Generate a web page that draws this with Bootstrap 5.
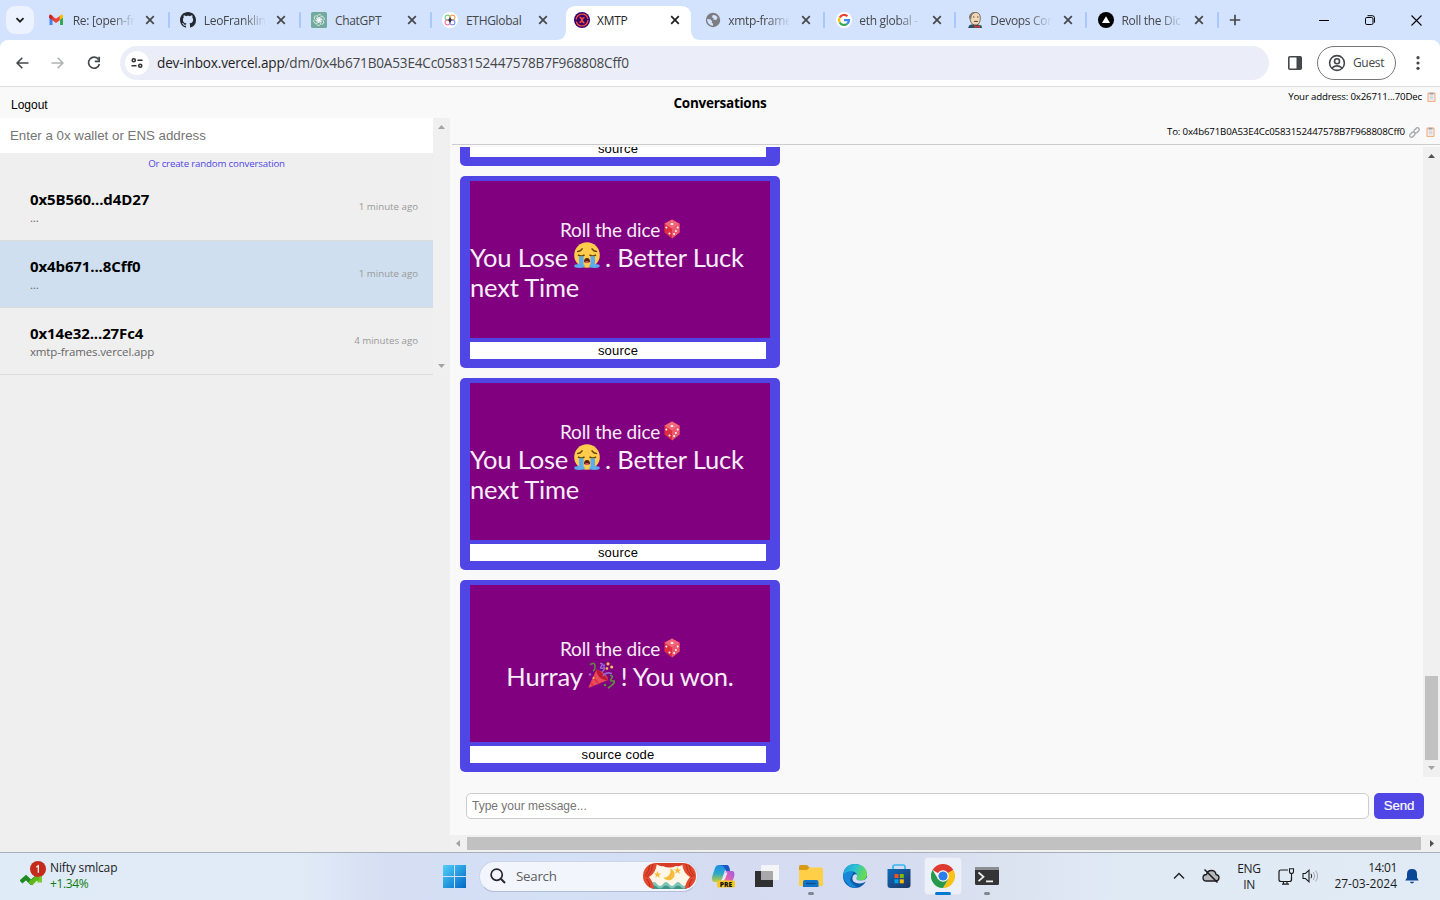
<!DOCTYPE html>
<html lang="en">
<head>
<meta charset="utf-8">
<meta name="viewport" content="width=device-width, initial-scale=1">
<title>XMTP</title>
<link href="https://cdn.jsdelivr.net/npm/bootstrap@5.3.0/dist/css/bootstrap.min.css" rel="stylesheet">
<style>
  body { width: 1440px; height: 900px; overflow: hidden; font-family: "Open Sans", "Noto Sans", sans-serif; font-size: 12px; line-height: 16px; color: #000; background: #f9f9f9; }
  svg { display: block; flex: none; }
  .arial { font-family: "Liberation Sans", Arial, sans-serif; }
  .t { white-space: nowrap; display: inline-block; }
  .ls-1 { letter-spacing: -.15px; }
  .ls-3 { letter-spacing: -.35px; }

  /* browser chrome */
  .tabstrip { height: 40px; background: #d3e3fd; color: #45474a; }
  .tab-search { width: 28px; height: 28px; margin: 6px 7.2px 6px 6px; border-radius: 9px; background: #ecf2fe; flex: none; }
  .btab { width: 131.1px; height: 40px; padding-left: 8px; position: relative; flex: none; letter-spacing: -.3px; }
  .btab .ttl { width: 64px; margin-left: 7.5px; padding-top: 1px; white-space: nowrap; flex: none; }
  .btab .fade-out { -webkit-mask-image: linear-gradient(90deg, #000 60%, transparent 97%); mask-image: linear-gradient(90deg, #000 60%, transparent 97%); }
  .btab .cls { margin-left: 8.5px; }
  .btab.sep::after { content: ""; position: absolute; left: 126.6px; top: 12px; width: 2px; height: 16px; background: #a8c7fa; border-radius: 1px; }
  .btab.on { color: #1f1f1f; }
  .btab > * { z-index: 1; position: relative; }
  .btab.on > .tab-bg { position: absolute; left: -10px; top: 6px; z-index: 0; }
  .toolbar { height: 46px; background: #d3e3fd; }
  .toolbar-in { background: #fff; border-radius: 8px 8px 0 0; height: 46px; width: 100%; }
  .omnibox { width: 1149px; height: 34px; border-radius: 17px; background: #ebeef8; font-size: 13.6px; letter-spacing: -.19px; color: #45474a; }
  .site-btn { width: 24px; height: 24px; border-radius: 50%; background: #fff; margin: 0 8px 0 5px; }
  .guest { width: 79px; height: 34px; border: 1px solid #74777a; border-radius: 17px; color: #45474a; }

  /* page */
  .app { height: 766px; border-top: 1px solid #dcdddf; }
  .topbar { height: 31px; }
  .tiny { font-size: 9.7px; letter-spacing: -.17px; }
  .side { width: 450px; height: 734px; background: #efefef; }
  .side-list { height: 257px; }
  .finder { height: 35px; background: #fff; font-size: 13.3px; color: #757575; padding-left: 10px; }
  .random { height: 21px; color: #4f46e5; }
  .conv { height: 67px; padding: 0 15px 0 30px; border-bottom: 1px solid #dcdcdc; }
  .conv.sel { background: #cfdfef; }
  .conv .who { font-size: 15px; font-weight: 700; line-height: 19px; letter-spacing: -.11px; padding-top: 1px; }
  .conv .last { font-size: 11.5px; color: #666; line-height: 17px; letter-spacing: -.15px; }
  .conv .ago { font-size: 9.7px; color: #999; }
  .vbar { width: 17px; background: #f0f0f0; }
  .peer { height: 27px; border-bottom: 1px solid #ccc; margin-left: 2px; padding: 2px 5px 0 0; }
  .log { overflow: hidden; height: 625px; }
  .log-in { margin-left: 10px; gap: 10px; }
  .frame-box { width: 320px; height: 192px; background: #4f46e5; border-radius: 5px; padding: 5px 10px 9px; flex: none; }
  .frame-img { width: 300px; height: 157px; background: #800080; color: #f8eef8; font-family: Lato, sans-serif; letter-spacing: -.17px; font-variant-ligatures: none; }
  .frame-img .l1 { font-size: 19px; line-height: 24px; height: 24px; }
  .frame-img .l1 svg { margin: 1px 0 0 4px; }
  .frame-img .l2 { font-size: 25.5px; line-height: 30px; }
  .src { width: 296px; height: 17px; background: #fff; margin-top: 4px; font-size: 13px; line-height: 18px; letter-spacing: .18px; text-align: center; }
  .composer { height: 58px; padding: 16px 16px 0 16px; }
  .msg { width: 903px; height: 26px; border: 1px solid #ccc; border-radius: 5px; background: #fff; font-size: 12px; color: #757575; padding-left: 5px; }
  .send { width: 50px; height: 26px; border-radius: 5px; background: #4f46e5; color: #fff; font-size: 13.3px; margin-left: 5px; -webkit-text-stroke: .2px #fff; }
  .hbar { height: 17px; background: #f0f0f0; }
  .hthumb { width: 954px; height: 13px; background: #c1c1c1; }
  .vthumb { width: 13px; height: 84px; background: #c1c1c1; margin-top: 518px; }

  /* taskbar */
  .taskbar { height: 48px; border-top: 1px solid #a9b0bc; padding-bottom: 1px; color: #1c1c1c;
    background: linear-gradient(90deg, #dfebf6 0, #e1ebf7 300px, #d6def3 385px, #d3e0f6 570px, #d5dcf2 720px, #d6dcf0 900px, #dbe3f0 1010px, #e0eaf5 1120px, #e0ebf6 1440px); }
  .slot { width: 44px; height: 46px; flex: none; position: relative; }
  .slot .dot { position: absolute; bottom: 4px; left: 19px; width: 6px; height: 3px; border-radius: 2px; background: #7f8696; }
  .slot .dot.wide { left: 14px; width: 16px; background: #0078d4; }
  .slot.act::before { content: ""; position: absolute; left: 3px; top: 4px; width: 38px; height: 38px; border-radius: 4px; background: #ecf0f9; border: 1px solid #e0e4f0; }
  .slot svg { position: relative; }
  .find { width: 219px; height: 31px; border-radius: 16px; background: #f2f5fc; border: 1px solid #cdd5e8; border-bottom-color: #b3bdd6; font-size: 13.300px; letter-spacing: -.25px; color: #5c5e62; }
</style>
</head>
<body>
<svg width="0" height="0" style="position:absolute">
  <defs>
    <symbol id="x" viewBox="0 0 10 10"><path d="M1.200 1.200l7.600 7.600M8.800 1.200L1.200 8.800" stroke="currentColor" stroke-width="1.700" fill="none"/></symbol>
    <symbol id="clip" viewBox="0 0 10 12"><rect x=".5" y="1" width="9" height="10.500" rx="1" fill="#f0b083"/><rect x="1.800" y="2.300" width="6.400" height="8" fill="#f4f2f4"/><path d="M2.800 1.300h4.400v2H2.800z" fill="#9ea2aa"/><path d="M3 5h4M3 6.600h4M3 8.200h4" stroke="#b9bcc8" stroke-width=".7"/></symbol>
    <symbol id="dice" viewBox="0 0 16 20"><path d="M8 .5l7.600 4.200v8.800L8 19.500.4 13.500V4.700z" fill="#dd2e44"/><path d="M8 .5l7.600 4.200L8 9.400.4 4.700z" fill="#f4677a"/><path d="M8 9.400l7.600-4.700v8.800L8 19.500z" fill="#ea596e"/><g fill="#fff"><ellipse cx="8" cy="5" rx="1.500" ry="1"/><circle cx="2.400" cy="8.600" r="1"/><circle cx="5.500" cy="14.400" r="1"/><circle cx="10.200" cy="15" r="1"/><circle cx="11.900" cy="11.900" r="1"/><circle cx="13.700" cy="8.400" r="1"/></g></symbol>
    <symbol id="sob" viewBox="0 0 26 26"><circle cx="13" cy="13" r="12.800" fill="#ffcc4d"/><path d="M3 9.600q3.500.1 5.500-3.200M17.600 6.400q2 3.200 5.500 3.200" stroke="#664500" stroke-width="1.300" fill="none"/><path d="M4 12.800q3.500 2.500 6.500 0M15.500 12.800q3.500 2.500 6.500 0" stroke="#664500" stroke-width="1.500" fill="none"/><path d="M5 14.200h4.500v9.300H5zM16.500 14.200H21v9.300h-4.500z" fill="#5dadec"/><ellipse cx="5.500" cy="24" rx="5.300" ry="1.900" fill="#5dadec"/><ellipse cx="20.500" cy="24" rx="5.300" ry="1.900" fill="#5dadec"/><path d="M10 20q0-4 3-4t3 4q-3 1.600-6 0z" fill="#5b1f0a"/><path d="M10.600 20.200q2.400-2.400 4.800 0-2.400 1-4.800 0z" fill="#e75a70"/></symbol>
    <symbol id="party" viewBox="0 0 27 27"><path d="M8.500 7.500Q20 11.500 20 18L1.500 25.500Q.3 26 .8 24.500z" fill="#ea4a5c"/><path d="M8.500 7.500q7 3 11.500 10.500-5 1-8.600-3T8.500 7.500z" fill="#be1931"/><path d="M5.500 16l5.500 6M3 21l2.500 3" stroke="#dd2e44" stroke-width="1.500"/><path d="M2 2.600q5-3 5 1.500T5 9" stroke="#5c913b" stroke-width="1.500" fill="none"/><path d="M12 1.500q4-.5 1.500 2.500t1.500 2-1 4M15 14q3-4.500 9-2.500" stroke="#9266cc" stroke-width="1.600" fill="none"/><path d="M22 13.500q4 0 1.500 3t1.500 2.500-1 4-3 2" stroke="#5c913b" stroke-width="1.600" fill="none"/><g fill="#ffcc4d"><circle cx="20" cy="1.800" r="1.600"/><circle cx="23.700" cy="5" r="1.500"/><circle cx="19" cy="6.500" r="1.200"/><circle cx="5.500" cy="16" r="1"/></g><g fill="#9266cc"><circle cx="2" cy="12.500" r="1.300"/><circle cx="16" cy="3.500" r="1.200"/></g><circle cx="17" cy="23" r="1.300" fill="#5c913b"/></symbol>
  </defs>
</svg>

<header class="tabstrip d-flex">
  <div class="tab-search d-flex align-items-center justify-content-center"><svg width="12" height="12" viewBox="0 0 12 12"><path d="M2.500 4.200L6 7.700l3.500-3.500" stroke="#1f1f1f" stroke-width="1.800" fill="none"/></svg></div>

  <div class="btab sep d-flex align-items-center">
    <svg width="16" height="16" viewBox="1 0 16 16"><path d="M1.500 4v9h3V6z" fill="#4285f4"/><path d="M12 6v7h3V4z" fill="#34a853"/><path d="M4 3.800l4 3 4-3V8l-4 3-4-3z" fill="#ea4335"/><path d="M1 4.500Q1 2 3 2.700l1.300 1V8L1 5.800z" fill="#c5221f"/><path d="M15 4.500Q15 2 13 2.700l-1.300 1V8L15 5.800z" fill="#fbbc04"/></svg>
    <div class="ttl fade-out"><span class="t">Re: [open-fr</span></div><svg class="cls" width="10" height="10"><use href="#x"/></svg>
  </div>
  <div class="btab sep d-flex align-items-center">
    <svg width="16" height="16" viewBox="0 0 16 16"><path fill="#24292f" d="M8 0C3.580 0 0 3.580 0 8c0 3.540 2.290 6.530 5.470 7.590.4.070.55-.17.55-.38 0-.19-.01-.82-.01-1.490-2.010.37-2.530-.49-2.690-.94-.09-.23-.48-.94-.82-1.130-.28-.15-.68-.52-.01-.53.63-.01 1.080.58 1.230.82.72 1.210 1.870.87 2.330.66.070-.52.28-.87.51-1.070-1.780-.2-3.640-.89-3.640-3.950 0-.87.31-1.590.82-2.150-.08-.2-.36-1.020.08-2.120 0 0 .67-.21 2.200.82.640-.18 1.320-.27 2-.27s1.360.09 2 .27c1.530-1.040 2.200-.82 2.200-.82.44 1.100.16 1.920.08 2.120.51.56.82 1.270.82 2.150 0 3.070-1.870 3.750-3.650 3.950.29.25.54.73.54 1.480 0 1.070-.01 1.930-.01 2.200 0 .21.15.46.55.38A8.010 8.010 0 0 0 16 8c0-4.420-3.580-8-8-8z"/></svg>
    <div class="ttl fade-out"><span class="t">LeoFranklin</span></div><svg class="cls" width="10" height="10"><use href="#x"/></svg>
  </div>
  <div class="btab sep d-flex align-items-center">
    <svg width="16" height="16" viewBox="0 0 16 16"><rect width="16" height="16" rx="1.500" fill="#74aa9c"/><g fill="none" stroke="#fff" stroke-width=".7"><g id="petal"><path d="M6.200 9V5a2.400 2.400 0 0 1 4.300-1.500M7 8.600l3.600-2.100"/></g><use href="#petal" transform="rotate(60 8 8)"/><use href="#petal" transform="rotate(120 8 8)"/><use href="#petal" transform="rotate(180 8 8)"/><use href="#petal" transform="rotate(240 8 8)"/><use href="#petal" transform="rotate(300 8 8)"/></g></svg>
    <div class="ttl"><span class="t">ChatGPT</span></div><svg class="cls" width="10" height="10"><use href="#x"/></svg>
  </div>
  <div class="btab d-flex align-items-center">
    <svg width="16" height="16" viewBox="0 0 16 16"><circle cx="8" cy="8" r="8" fill="#fff"/><g fill="none" stroke-width="1.100"><circle cx="5.500" cy="5.500" r="2.400" stroke="#7fc98b"/><circle cx="10.500" cy="5.500" r="2.400" stroke="#f3a45c"/><circle cx="5.500" cy="10.500" r="2.400" stroke="#ef7a9c"/><circle cx="10.500" cy="10.500" r="2.400" stroke="#7b8cf0"/></g><path d="M8 5l1.700 3L8 11 6.300 8z" fill="#32333b"/></svg>
    <div class="ttl"><span class="t">ETHGlobal</span></div><svg class="cls" width="10" height="10"><use href="#x"/></svg>
  </div>
  <div class="btab on d-flex align-items-center">
    <svg class="tab-bg" width="145" height="34" viewBox="0 0 145 34"><path d="M0 34q10 0 10-10V10Q10 0 20 0h105q10 0 10 10v14q0 10 10 10z" fill="#fff"/></svg>
    <svg width="16" height="16" viewBox="0 0 16 16"><circle cx="8" cy="8" r="8" fill="#31006e"/><circle cx="8" cy="8" r="5.900" fill="none" stroke="#fc4f37" stroke-width="1.300" stroke-dasharray="16.500 2"/><path d="M5.500 5.500q1.500-.5 2.500 2.500t2.500 2.500M10.500 5.500q-1.500 0-2.500 2.500t-2.500 2.500" stroke="#fc4f37" stroke-width="1.600" fill="none"/></svg>
    <div class="ttl"><span class="t">XMTP</span></div><svg class="cls" width="10" height="10"><use href="#x"/></svg>
  </div>
  <div class="btab sep d-flex align-items-center">
    <svg width="16" height="16" viewBox="0 0 16 16"><circle cx="8" cy="8" r="7.200" fill="#7b7d80"/><path d="M2.200 7l3 .3 2 2-.5 1.500 1.500 1-.3 2Q3 13 2.200 8.500zM8 2.700q3 0 4.600 2.500l-1.300 2.700-3-.3.3-1.600-1.800-.7z" fill="#d3e3fd"/></svg>
    <div class="ttl fade-out"><span class="t">xmtp-frame</span></div><svg class="cls" width="10" height="10"><use href="#x"/></svg>
  </div>
  <div class="btab sep d-flex align-items-center">
    <svg width="16" height="16" viewBox="0 0 16 16"><circle cx="8" cy="8" r="8" fill="#fff"/><g fill="none" stroke-width="2.200"><path d="M11.500 4.300A5 5 0 0 0 3.700 5.600" stroke="#ea4335"/><path d="M3.700 5.600a5 5 0 0 0 0 4.900" stroke="#fbbc05"/><path d="M3.700 10.500a5 5 0 0 0 7.500 1.300" stroke="#34a853"/><path d="M8 8.200h5a5 5 0 0 1-1.800 3.600" stroke="#4285f4"/></g></svg>
    <div class="ttl fade-out"><span class="t">eth global -</span></div><svg class="cls" width="10" height="10"><use href="#x"/></svg>
  </div>
  <div class="btab sep d-flex align-items-center">
    <svg width="16" height="16" viewBox="0 0 16 16"><path d="M1 16l1.500-3L7 12l4 .5 3.500 1 .5 2.500z" fill="#335061"/><path d="M2.500 5Q3 .5 8 .4t5.300 4.800Q13.500 12 9.500 13 5 13.500 3.500 9z" fill="#f0d6b7" stroke="#4d4033" stroke-width=".7"/><path d="M2.600 5Q4 .2 8.500.8 5 2 4.600 4.500L4 8z" fill="#7d7366"/><path d="M6 5h1.500M10 5h1.500M7 9.700q2-1 4 0" stroke="#4d4033" stroke-width=".9"/><path d="M7 13l3 1.300L13 13v3l-3-1-2 1z" fill="#d33833"/></svg>
    <div class="ttl fade-out"><span class="t">Devops Con</span></div><svg class="cls" width="10" height="10"><use href="#x"/></svg>
  </div>
  <div class="btab sep d-flex align-items-center">
    <svg width="16" height="16" viewBox="0 0 16 16"><circle cx="8" cy="8" r="8" fill="#000"/><path d="M8 4.300l4 6.700H4z" fill="#fff"/></svg>
    <div class="ttl fade-out"><span class="t">Roll the Dic</span></div><svg class="cls" width="10" height="10"><use href="#x"/></svg>
  </div>
  <div class="d-flex align-items-center ms-2"><svg width="12" height="12" viewBox="0 0 12 12"><path d="M6 .8v10.400M.8 6h10.400" stroke="#45474a" stroke-width="1.700"/></svg></div>
  <div class="d-flex align-items-center ms-auto" style="gap:36px;padding-right:18px">
    <svg width="10" height="10" viewBox="0 0 10 10"><path d="M0 5.500h10" stroke="#000"/></svg>
    <svg width="10" height="10" viewBox="0 0 10 10"><rect x=".5" y="2.500" width="7.500" height="7" rx="1.300" fill="none" stroke="#000"/><path d="M2.500.7h4.800q2.200 0 2.200 2.200v4.800" fill="none" stroke="#000"/></svg>
    <svg width="11" height="11" viewBox="0 0 11 11"><path d="M.5.5l10 10M10.500.5l-10 10" stroke="#000" stroke-width="1.100"/></svg>
  </div>
</header>

<div class="toolbar"><div class="toolbar-in d-flex align-items-center">
  <svg style="margin-left:16px" width="13" height="12" viewBox="0 0 13 12"><path d="M12.500 6H1.200M6.300.8L1.100 6l5.200 5.200" stroke="#45474a" stroke-width="1.600" fill="none"/></svg>
  <svg style="margin-left:22px" width="13" height="12" viewBox="0 0 13 12"><path d="M.5 6h11.300M6.700.8L11.900 6l-5.200 5.200" stroke="#b0b2b5" stroke-width="1.600" fill="none"/></svg>
  <svg style="margin-left:23px" width="14" height="14" viewBox="0 0 14 14"><path d="M11.600 3.600A5.500 5.500 0 1 0 12.400 8" stroke="#45474a" stroke-width="1.700" fill="none"/><path d="M12.200.8v4.500H7.800" stroke="#45474a" stroke-width="1.700" fill="none"/></svg>
  <div class="omnibox d-flex align-items-center" style="margin-left:19px">
    <div class="site-btn d-flex align-items-center justify-content-center"><svg width="12" height="12" viewBox="0 0 13 12"><g fill="none" stroke="#303236" stroke-width="1.700"><circle cx="3" cy="3" r="1.700"/><path d="M7 3h5.500M.5 9H6"/><circle cx="10" cy="9" r="1.700"/></g></svg></div>
    <span class="t"><span style="color:#1f1f1f">dev-inbox.vercel.app</span>/dm/0x4b671B0A53E4Cc0583152447578B7F968808Cff0</span>
  </div>
  <svg style="margin-left:19px" width="14" height="14" viewBox="0 0 14 14"><rect x=".8" y=".8" width="12.400" height="12.400" fill="none" stroke="#45474a" stroke-width="1.600" rx="1"/><path d="M8.500 1H13v12H8.500z" fill="#45474a"/></svg>
  <div class="guest d-flex align-items-center" style="margin-left:15px"><svg style="margin-left:10px" width="18" height="18" viewBox="0 0 18 18"><g fill="none" stroke="#45474a" stroke-width="1.600"><circle cx="9" cy="9" r="7.400"/><circle cx="9" cy="7.200" r="2.500"/><path d="M3.800 14q5.200-4.200 10.400 0"/></g></svg><span class="t ls-3" style="margin-left:7px">Guest</span></div>
  <svg style="margin-left:20px" width="4" height="14" viewBox="0 0 4 14" fill="#45474a"><circle cx="2" cy="1.700" r="1.600"/><circle cx="2" cy="7" r="1.600"/><circle cx="2" cy="12.300" r="1.600"/></svg>
</div></div>

<main class="app">
  <div class="topbar d-flex">
    <div class="col d-flex align-items-center" style="padding:4px 0 0 11px"><span class="t arial">Logout</span></div>
    <div class="col-auto d-flex align-items-center fw-bold" style="font-size:13.500px;letter-spacing:-.26px;padding-top:1px"><span class="t">Conversations</span></div>
    <div class="col d-flex justify-content-end tiny" style="padding:2px 4px 0 7px"><span class="t">Your address: 0x26711...70Dec</span><svg style="margin:2px 0 0 5px" width="9" height="12"><use href="#clip"/></svg></div>
  </div>
  <div class="d-flex">
    <aside class="side">
      <div class="side-list d-flex">
        <div class="flex-grow-1">
          <div class="finder arial d-flex align-items-center"><span class="t">Enter a 0x wallet or ENS address</span></div>
          <div class="random tiny d-flex align-items-center justify-content-center"><span class="t">Or create random conversation</span></div>
          <div class="conv d-flex align-items-center justify-content-between"><div><div class="who"><span class="t">0x5B560...d4D27</span></div><div class="last">...</div></div><span class="ago t">1 minute ago</span></div>
          <div class="conv sel d-flex align-items-center justify-content-between"><div><div class="who"><span class="t">0x4b671...8Cff0</span></div><div class="last">...</div></div><span class="ago t">1 minute ago</span></div>
          <div class="conv d-flex align-items-center justify-content-between"><div><div class="who"><span class="t">0x14e32...27Fc4</span></div><div class="last"><span class="t">xmtp-frames.vercel.app</span></div></div><span class="ago t">4 minutes ago</span></div>
        </div>
        <div class="vbar d-flex flex-column align-items-center justify-content-between" style="padding:7px 0"><svg width="7" height="4"><path d="M0 4L3.500 0 7 4z" fill="#a3a3a3"/></svg><svg width="7" height="4"><path d="M0 0l3.500 4L7 0z" fill="#a3a3a3"/></svg></div>
      </div>
    </aside>
    <section style="width:990px">
      <div class="peer tiny d-flex align-items-center justify-content-end"><span class="t">To: 0x4b671B0A53E4Cc0583152447578B7F968808Cff0</span>
        <svg style="margin-left:4px" width="11" height="11" viewBox="0 0 11 11" fill="none" stroke="#a5a8ac" stroke-width="1.300"><rect x="4.600" y="1.600" width="6" height="3.600" rx="1.800" transform="rotate(-45 7.600 3.400)"/><rect x=".4" y="5.800" width="6" height="3.600" rx="1.800" transform="rotate(-45 3.400 7.600)"/></svg>
        <svg style="margin-left:6px" width="9" height="12"><use href="#clip"/></svg></div>
      <div class="d-flex justify-content-between" style="padding-top:2px;height:632px">
        <div class="log d-flex flex-column justify-content-end"><div class="log-in d-flex flex-column justify-content-end">
          <div class="frame-box"><div class="frame-img"></div><div class="src arial"><span class="t">source</span></div></div>
          <div class="frame-box"><div class="frame-img d-flex flex-column justify-content-center">
            <div class="l1 d-flex justify-content-center"><span class="t">Roll the dice</span><svg width="16" height="20"><use href="#dice"/></svg></div>
            <div class="l2 d-flex"><span class="t">You Lose</span><svg style="margin:0 5px 0 6px" width="26" height="26"><use href="#sob"/></svg><span class="t">. Better Luck</span></div>
            <div class="l2"><span class="t">next Time</span></div></div>
            <div class="src arial"><span class="t">source</span></div></div>
          <div class="frame-box"><div class="frame-img d-flex flex-column justify-content-center">
            <div class="l1 d-flex justify-content-center"><span class="t">Roll the dice</span><svg width="16" height="20"><use href="#dice"/></svg></div>
            <div class="l2 d-flex"><span class="t">You Lose</span><svg style="margin:0 5px 0 6px" width="26" height="26"><use href="#sob"/></svg><span class="t">. Better Luck</span></div>
            <div class="l2"><span class="t">next Time</span></div></div>
            <div class="src arial"><span class="t">source</span></div></div>
          <div class="frame-box"><div class="frame-img d-flex flex-column justify-content-center">
            <div class="l1 d-flex justify-content-center"><span class="t">Roll the dice</span><svg width="16" height="20"><use href="#dice"/></svg></div>
            <div class="l2 d-flex justify-content-center"><span class="t">Hurray</span><svg style="margin:1px 6px 0 5px" width="27" height="27"><use href="#party"/></svg><span class="t">! You won.</span></div></div>
            <div class="src arial"><span class="t">source code</span></div></div>
        </div></div>
        <div class="vbar d-flex flex-column align-items-center" style="height:630px;padding:7px 0 7px"><svg width="7" height="4"><path d="M0 4L3.500 0 7 4z" fill="#505050"/></svg><div class="vthumb"></div><svg class="mt-auto" width="7" height="4"><path d="M0 0l3.500 4L7 0z" fill="#a3a3a3"/></svg></div>
      </div>
      <div class="composer d-flex"><div class="msg arial d-flex align-items-center"><span class="t">Type your message...</span></div><div class="send arial d-flex align-items-center justify-content-center"><span class="t ls-1">Send</span></div></div>
      <div class="hbar d-flex align-items-center"><svg style="margin:0 7px 0 6px" width="4" height="7"><path d="M4 0L0 3.500 4 7z" fill="#a3a3a3"/></svg><div class="hthumb"></div><svg style="margin-left:9px" width="4" height="7"><path d="M0 0l4 3.500L0 7z" fill="#505050"/></svg></div>
    </section>
  </div>
</main>

<footer class="taskbar d-flex align-items-center">
  <div class="d-flex align-items-center" style="width:432.500px;padding-left:20px">
    <svg width="27" height="30" viewBox="0 0 27 30" style="margin-top:-3px"><path d="M1 22l5-4.500 5 4.800 5-4.500" stroke="#1f8a1f" stroke-width="4.200" fill="none"/><path d="M9.500 21l2.500 1.500 4.500-4.500 4 2" stroke="#5fb818" stroke-width="4.200" fill="none"/><path d="M22 14.500v8h-5z" fill="#76cc28"/><circle cx="18" cy="9" r="8" fill="#c42b1c"/><path d="M16.300 7.200l2-1.500v7" stroke="#fff" stroke-width="1.200" fill="none"/></svg>
    <div style="margin-left:3px"><div><span class="t ls-1">Nifty smlcap</span></div><div style="color:#107c10"><span class="t ls-3">+1.34%</span></div></div>
  </div>
  <div class="slot d-flex align-items-center justify-content-center"><svg width="23" height="23" viewBox="0 0 23 23"><defs><linearGradient id="win" gradientUnits="userSpaceOnUse" x1="0" y1="0" x2="23" y2="23"><stop stop-color="#50d0fb"/><stop offset="1" stop-color="#0067c6"/></linearGradient></defs><path d="M0 0h11v11H0zM12 0h11v11H12zM0 12h11v11H0zM12 12h11v11H12z" fill="url(#win)"/></svg></div>
  <div class="find d-flex align-items-center" style="margin-left:2.500px"><svg style="margin-left:10px" width="16" height="16" viewBox="0 0 16 16"><circle cx="6.700" cy="6.700" r="5.600" fill="none" stroke="#26282c" stroke-width="1.700"/><path d="M10.800 10.800l4.200 4.200" stroke="#26282c" stroke-width="2"/></svg><span class="t" style="margin-left:10px">Search</span>
    <svg class="ms-auto" style="margin-right:1px" width="53" height="26" viewBox="0 0 53 26"><defs><clipPath id="pill"><rect width="53" height="26" rx="13"/></clipPath></defs><g clip-path="url(#pill)"><path d="M0 0h53v26H0z" fill="#fdf6e9"/><path d="M8 21q3-4 6 0t6 0 6 0 6 0 6 0 6 0v8H8z" fill="#7cc4b6"/><path d="M8 24q3-3 6 0t6 0 6 0 6 0 6 0 6 0v4H8z" fill="#3f9389"/><path d="M0 0h14q-1 10-8 14 5 6 5 12H0zM53 0H39q1 10 8 14-5 6-5 12h11z" fill="#e2492f"/><path d="M12 0q4 4 8 3 6 3 13 0 5 1 8-3z" fill="#d63d28"/><path d="M7 1Q6 9 2 13M10 1Q9 9 4 14M4 16q3 4 3 9M46 1q1 8 5 12M43 1q1 8 6 13M49 16q-3 4-3 9" stroke="#b42d1e" fill="none"/><path d="M27 5.500a6 6 0 1 1-6.500 9 6.500 6.500 0 0 0 6.500-9z" fill="#f5bd3b"/><path d="M14.500 8l1 2.500h2.500l-2 1.700.8 2.500-2.300-1.500-2.300 1.500.8-2.500-2-1.700h2.500zM34.500 4l1 2.500H38l-2 1.700.8 2.500-2.300-1.500-2.300 1.500.8-2.500-2-1.700h2.500z" fill="#f5bd3b"/></g></svg></div>
  <div class="slot d-flex align-items-center justify-content-center" style="margin-left:3px"><svg width="24" height="24" viewBox="0 0 24 24"><defs><linearGradient id="cp1" x1="0" y1="0" x2="0" y2="1"><stop stop-color="#1b8ee6"/><stop offset=".5" stop-color="#2ba9c9"/><stop offset="1" stop-color="#c7cf35"/></linearGradient><linearGradient id="cp2" x1="1" y1="0" x2="0" y2="1"><stop stop-color="#a455e8"/><stop offset=".6" stop-color="#ee6aa2"/><stop offset="1" stop-color="#ffb060"/></linearGradient></defs><path d="M8 1h8q2 0 3 5h-5l-3 9q-1 3-4 3H4q-4 0-3-5L4 4q1-3 4-3z" fill="url(#cp1)"/><path d="M9 1h7q2 0 3 6h-4q-2-6-6-6z" fill="#1f55c4"/><path d="M16 7h5q3 0 2.300 5L21 19q-1 3-4 3H9q3-1 4-6l1-6q.5-3 2-3z" fill="url(#cp2)"/><path d="M14.500 8.500h2L14 15q-.5 1-1.500 1h-2q1.500-1 2-3z" fill="#e9edf8"/><rect x="6" y="16.500" width="18" height="7" rx="1.500" fill="#f8c920"/><text x="15" y="22.600" font-size="6.800" font-weight="800" text-anchor="middle" fill="#111">PRE</text></svg></div>
  <div class="slot d-flex align-items-center justify-content-center" style="margin-left:-.500px"><svg width="24" height="24" viewBox="0 0 24 24"><path d="M0 7h18v16H0z" fill="#303030"/><path d="M6 1h18v15H6z" fill="#f4f5f7"/><path d="M6 7h12v9H6z" fill="#a9a9ab"/></svg></div>
  <div class="slot d-flex align-items-center justify-content-center"><svg width="24" height="22" viewBox="0 0 24 22"><path d="M0 1.500Q0 0 1.500 0H8l2.500 2.500V7H0z" fill="#d99a14"/><path d="M0 5h8l2.500-2.500H22q2 0 2 2V21H0z" fill="#ffcf48"/><path d="M4 22v-5q0-2 2-2h11.500q2 0 2 2v5z" fill="#1173c7"/><path d="M7 18.500h9.500" stroke="#0a4a86" stroke-width="1.200"/></svg><span class="dot"></span></div>
  <div class="slot d-flex align-items-center justify-content-center"><svg width="24" height="24" viewBox="0 0 24 24"><defs><linearGradient id="eg" x1="0" y1="0" x2="1" y2=".3"><stop stop-color="#1f9be8"/><stop offset=".55" stop-color="#2cc4cf"/><stop offset="1" stop-color="#68dc4f"/></linearGradient></defs><circle cx="12" cy="12" r="12" fill="#0c5aa8"/><path d="M0 12Q1 0 12 0t12 10q0 6-6.500 6.500-4.500 0-4-2.500 1-1 .5-3-1-3.500-5-3.500Q2 7.500 0 12z" fill="url(#eg)"/><path d="M0 12q2-4.500 8-4.500Q12 7.500 8.500 12T11 21q2 2 4.500 2.500Q4 25.500 0 12z" fill="#1787d9"/><path d="M9.800 12q-1.500 5.500 3.500 7 5 1.300 9.700-1.500l1-1v-3q-2 3-6.500 3-4.500 0-4-2.500 1-1 .5-3-2-2-4.200 1z" fill="#d6ddf2"/></svg></div>
  <div class="slot d-flex align-items-center justify-content-center"><svg width="24" height="24" viewBox="0 0 24 24"><defs><linearGradient id="sg" x1="0" y1="0" x2="1" y2="1"><stop stop-color="#0f6cbd"/><stop offset="1" stop-color="#1f335f"/></linearGradient></defs><path d="M6 6V3q0-2 2-2h8q2 0 2 2v3" fill="none" stroke="#35b8f1" stroke-width="1.700"/><path d="M.5 5h23v16q0 3-3 3h-17q-3 0-3-3z" fill="url(#sg)"/><path d="M7.500 10h4v4h-4z" fill="#f25022"/><path d="M12.800 10h4v4h-4z" fill="#7fba00"/><path d="M7.500 15.300h4v4h-4z" fill="#00a4ef"/><path d="M12.800 15.300h4v4h-4z" fill="#ffb900"/></svg></div>
  <div class="slot act d-flex align-items-center justify-content-center"><svg width="24" height="24" viewBox="0 0 24 24"><path d="M12 12L1.600 6A12 12 0 0 1 22.400 6z" fill="#dd3b2f"/><path d="M12 12l10.400-6A12 12 0 0 1 12 24l5-9z" fill="#fbc116"/><path d="M1.600 6A12 12 0 0 0 12 24l5.200-9L12 17l-5-2z" fill="#26994a"/><circle cx="12" cy="12" r="5.800" fill="#fff"/><circle cx="12" cy="12" r="4.600" fill="#2b7de9"/></svg><span class="dot wide"></span></div>
  <div class="slot d-flex align-items-center justify-content-center"><svg width="24" height="18" viewBox="0 0 24 18"><rect width="24" height="18" rx="1.500" fill="#343436"/><path d="M0 1.500Q0 0 1.500 0h21Q24 0 24 1.500V3H0z" fill="#8b8d92"/><path d="M3.500 5.500l5 4.300-5 4.300M11 14.300h7" stroke="#f1f1f1" stroke-width="1.700" fill="none"/></svg><span class="dot"></span></div>
  <div class="d-flex align-items-center ms-auto" style="padding-right:21px">
    <svg width="12" height="8" viewBox="0 0 12 8"><path d="M1 6.500l5-5 5 5" stroke="#1c1c1c" stroke-width="1.300" fill="none"/></svg>
    <svg style="margin-left:17px" width="18" height="14" viewBox="0 0 18 14"><path d="M4.500 12Q1 12 1 8.800T4.500 5.500Q5.500 1.500 9.500 1.500t4.500 4q3 .3 3 3.300T14 12z" fill="#b4b8bd" stroke="#1c1c1c" stroke-width="1.300"/><path d="M2.500.5l13 13" stroke="#1c1c1c" stroke-width="1.500"/></svg>
    <div class="text-center ls-3" style="width:40px;margin-left:9px;padding-top:1px"><span class="t">ENG</span><br><span class="t">IN</span></div>
    <svg style="margin-left:9px" width="17" height="17" viewBox="0 0 17 17"><path d="M10 2H3Q1 2 1 4v7.500q0 2 2 2h8.500q2 0 2-2V9M5.500 13.500v2.500M9 13.500v2.500M4 16.200h7" fill="none" stroke="#1c1c1c" stroke-width="1.200"/><path d="M11.500.8h4v2.700q0 2-2 2t-2-2zM13.500 5.500V12" stroke="#1c1c1c" stroke-width="1.100" fill="none"/></svg>
    <svg style="margin-left:7px" width="17" height="14" viewBox="0 0 17 14"><path d="M1 4.500h2.500L7 1.200v11.600L3.500 9.500H1z" fill="none" stroke="#1c1c1c" stroke-width="1.100"/><path d="M9 4.800q1.500 2.200 0 4.400" fill="none" stroke="#1c1c1c"/><path d="M11.300 3q3 4 0 8M13.600 1.500q4 5.500 0 11" fill="none" stroke="#a2a9b0"/></svg>
    <div class="text-end" style="width:78px"><span class="t ls-3">14:01</span><br><span class="t">27-03-2024</span></div>
    <svg style="margin-left:8px" width="14" height="16" viewBox="0 0 14 16"><path d="M2 6q0-5 5-5t5 5v3.500l1.700 3H.3L2 9.500z" fill="#0a4796"/><path d="M4.800 13.700h4.400Q8.500 15.500 7 15.500t-2.200-1.800z" fill="#0a4796"/></svg>
  </div>
</footer>
<script src="https://cdn.jsdelivr.net/npm/bootstrap@5.3.0/dist/js/bootstrap.bundle.min.js"></script>
</body>
</html>
